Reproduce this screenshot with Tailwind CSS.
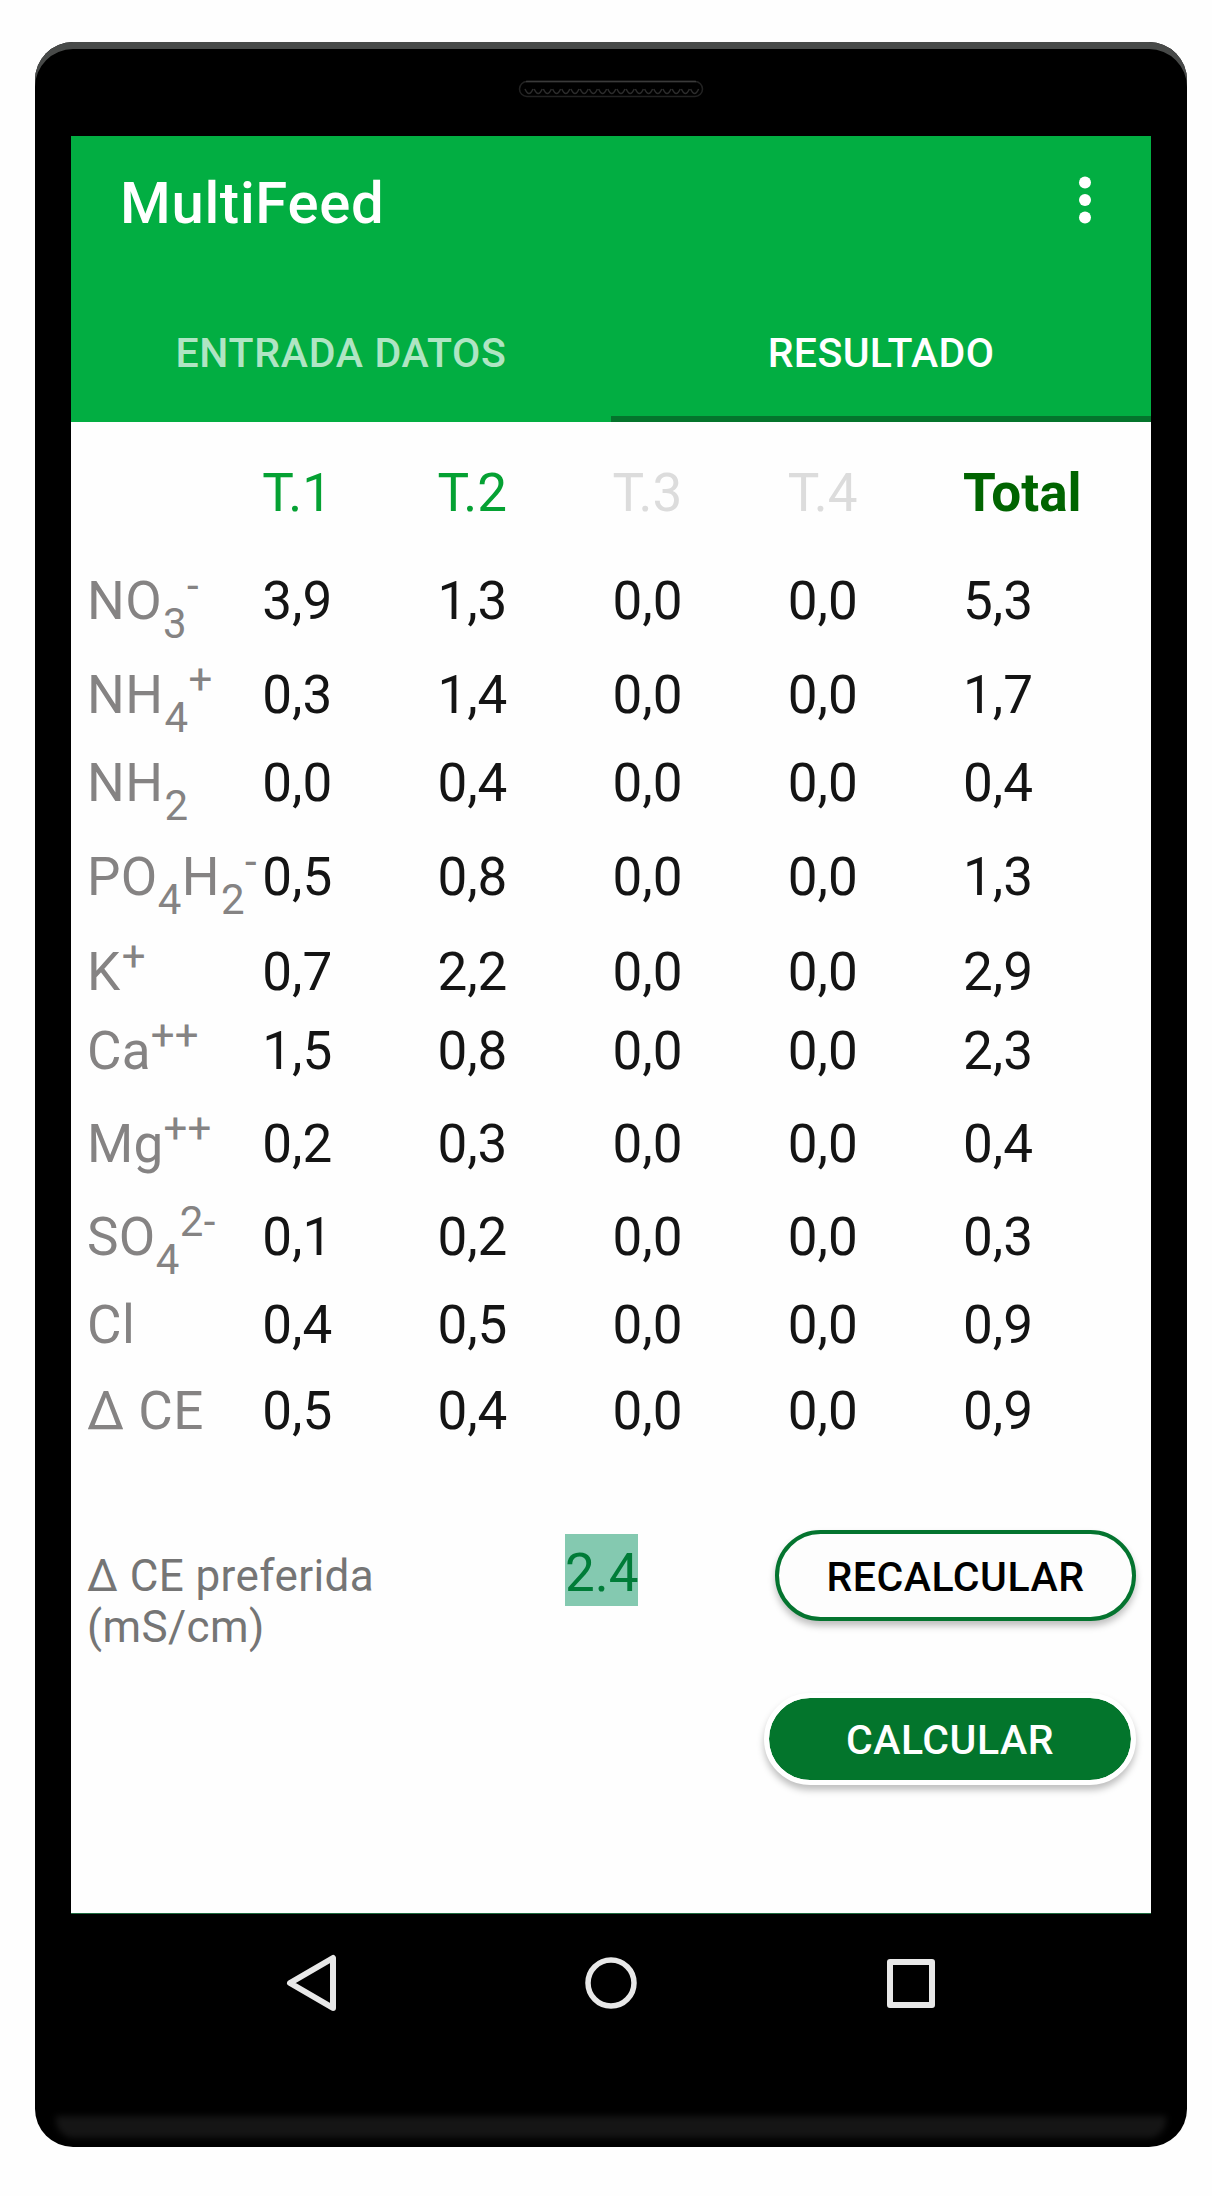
<!DOCTYPE html>
<html lang="es">
<head>
  <meta charset="UTF-8" />
  <meta name="viewport" content="width=device-width, initial-scale=1.0"/>
  <title>MultiFeed</title>
  <script src="https://cdn.jsdelivr.net/npm/@tailwindcss/browser@4"></script>
</head>
<body class="bg-[#fefefe] font-['Roboto',sans-serif]">

<!-- Phone body -->
<div class="relative mt-[42px] ml-[35px] w-[1152px] h-[2105px] rounded-[38px] bg-black overflow-hidden flex flex-col items-center shadow-[inset_0_7px_0_#484a49]">

  <!-- Speaker -->
  <div class="h-[94px] pt-[38px]">
    <svg class="block" width="186" height="18" viewBox="0 0 186 18" fill="none">
      <rect x="1.5" y="1.5" width="183" height="15" rx="7.5" stroke="#222" stroke-width="1.5"/>
      <path d="M8 1.5H178" stroke="#3a3a3a" stroke-width="1.5"/>
      <path d="M7 9q4 9 8 0m1.200 0q4 9 8 0m1.200 0q4 9 8 0m1.200 0q4 9 8 0m1.200 0q4 9 8 0m1.200 0q4 9 8 0m1.200 0q4 9 8 0m1.200 0q4 9 8 0m1.200 0q4 9 8 0m1.200 0q4 9 8 0m1.200 0q4 9 8 0m1.200 0q4 9 8 0m1.200 0q4 9 8 0m1.200 0q4 9 8 0m1.200 0q4 9 8 0m1.200 0q4 9 8 0m1.200 0q4 9 8 0m1.200 0q4 9 8 0m1.200 0q4 9 8 0" stroke="#2c2c2c" stroke-width="1.5"/>
    </svg>
  </div>

  <!-- Screen -->
  <main class="w-[1080px] h-[1778px] shrink-0 bg-[#fefefe] border-b border-[#1d6b3f] flex flex-col">
    <header class="h-[286px] bg-[#02ae42] text-white flex flex-col">
      <div class="h-[150px] pl-[49px] pr-[59px] flex items-start justify-between">
        <h1 class="pt-[33px] text-[58px] leading-[68px] font-medium tracking-[0.7px]">MultiFeed</h1>
        <svg class="mt-[38px]" width="14" height="52" viewBox="0 0 14 52" fill="#fff">
          <circle cx="7" cy="8.500" r="6"/>
          <circle cx="7" cy="26" r="6"/>
          <circle cx="7" cy="43.500" r="6"/>
        </svg>
      </div>
      <nav class="flex-1 grid grid-cols-2 text-[41px] font-medium text-center">
        <a class="pt-[43px] leading-[48px] text-white/70 tracking-[0.7px]">ENTRADA DATOS</a>
        <a class="pt-[43px] leading-[48px] border-b-6 border-[#04742c] tracking-[0.4px]">RESULTADO</a>
      </nav>
    </header>

    <!-- Results -->
    <section class="pl-[16px] pt-[40px] text-[53px] leading-[62px] text-[#141414] whitespace-nowrap">
      <div class="grid grid-cols-[repeat(5,175.2px)_1fr] h-[108px]">
        <span></span><span class="text-[#05a133]">T.1</span><span class="text-[#05a133]">T.2</span><span class="text-[#dcdcdc]">T.3</span><span class="text-[#dcdcdc]">T.4</span><span class="font-bold text-[#006400]">Total</span>
      </div>
      <div class="grid grid-cols-[repeat(5,175.2px)_1fr] h-[94px]">
        <span class="text-[#858383] tracking-[0.4px]">NO<sub class="static align-[-19px] text-[42px] ml-[1px]">3</sub><sup class="static align-[19px] text-[42px]">-</sup></span><span>3,9</span><span>1,3</span><span>0,0</span><span>0,0</span><span>5,3</span>
      </div>
      <div class="grid grid-cols-[repeat(5,175.2px)_1fr] h-[88px]">
        <span class="text-[#858383] tracking-[0.4px]">NH<sub class="static align-[-19px] text-[42px] ml-[1px]">4</sub><sup class="static align-[19px] text-[42px]">+</sup></span><span>0,3</span><span>1,4</span><span>0,0</span><span>0,0</span><span>1,7</span>
      </div>
      <div class="grid grid-cols-[repeat(5,175.2px)_1fr] h-[94px]">
        <span class="text-[#858383] tracking-[0.4px]">NH<sub class="static align-[-19px] text-[42px] ml-[1px]">2</sub></span><span>0,0</span><span>0,4</span><span>0,0</span><span>0,0</span><span>0,4</span>
      </div>
      <div class="grid grid-cols-[repeat(5,175.2px)_1fr] h-[95px]">
        <span class="text-[#858383] tracking-[0.4px]">PO<sub class="static align-[-19px] text-[42px]">4</sub>H<sub class="static align-[-19px] text-[42px] ml-[1px]">2</sub><sup class="static align-[19px] text-[42px]">-</sup></span><span>0,5</span><span>0,8</span><span>0,0</span><span>0,0</span><span>1,3</span>
      </div>
      <div class="grid grid-cols-[repeat(5,175.2px)_1fr] h-[79px]">
        <span class="text-[#858383] tracking-[0.4px]">K<sup class="static align-[19px] text-[42px] ml-[1px]">+</sup></span><span>0,7</span><span>2,2</span><span>0,0</span><span>0,0</span><span>2,9</span>
      </div>
      <div class="grid grid-cols-[repeat(5,175.2px)_1fr] h-[93px]">
        <span class="text-[#858383] tracking-[0.2px]">Ca<sup class="static align-[19px] text-[42px]">++</sup></span><span>1,5</span><span>0,8</span><span>0,0</span><span>0,0</span><span>2,3</span>
      </div>
      <div class="grid grid-cols-[repeat(5,175.2px)_1fr] h-[93px]">
        <span class="text-[#858383] tracking-[0.2px]">Mg<sup class="static align-[19px] text-[42px]">++</sup></span><span>0,2</span><span>0,3</span><span>0,0</span><span>0,0</span><span>0,4</span>
      </div>
      <div class="grid grid-cols-[repeat(5,175.2px)_1fr] h-[88px]">
        <span class="text-[#858383] tracking-[0.4px]">SO<sub class="static align-[-19px] text-[42px]">4</sub><sup class="static align-[19px] text-[42px]">2-</sup></span><span>0,1</span><span>0,2</span><span>0,0</span><span>0,0</span><span>0,3</span>
      </div>
      <div class="grid grid-cols-[repeat(5,175.2px)_1fr] h-[86px]">
        <span class="text-[#858383] tracking-[0.4px]">Cl</span><span>0,4</span><span>0,5</span><span>0,0</span><span>0,0</span><span>0,9</span>
      </div>
      <div class="grid grid-cols-[repeat(5,175.2px)_1fr] h-[62px]">
        <span class="text-[#858383] tracking-[0.4px]">Δ CE</span><span>0,5</span><span>0,4</span><span>0,0</span><span>0,0</span><span>0,9</span>
      </div>
    </section>

    <!-- Target EC and actions -->
    <section class="mt-[88px] pl-[16px] flex items-start">
      <p class="w-[478px] pt-[21px] text-[44px] leading-[51px] tracking-[0.4px] text-[#757575]">Δ CE preferida<br>(mS/cm)</p>
      <div class="mt-[4px] w-[73px] h-[72px] pt-[8px] bg-[#84c9b0] text-[#007c38] text-[53px] leading-[62px] text-center whitespace-nowrap">2.4</div>
      <button class="ml-[137px] w-[361px] h-[91px] pt-[4px] rounded-full border-[4.5px] border-[#04742f] bg-[#fdfdfd] text-black text-[41px] font-medium tracking-[0.5px] shadow-[0_5px_7px_rgba(0,0,0,0.25)]">RECALCULAR</button>
    </section>
    <div class="mt-[40px] mr-[15px] flex justify-end">
      <button class="w-[372px] h-[92px] pt-[3px] rounded-full border-[5px] border-white bg-[#03752c] bg-clip-padding text-white text-[41px] font-medium tracking-[0.5px] shadow-[0_5px_7px_rgba(0,0,0,0.25)]">CALCULAR</button>
    </div>
  </main>

  <!-- Android navigation bar -->
  <nav class="pt-[40px] pr-[1px] w-full flex justify-center gap-[249px]">
    <svg width="50" height="58" viewBox="0 0 50 58" fill="none" stroke="#e8e8e8" stroke-width="6" stroke-linejoin="round">
      <path d="M47 4V54L4 29Z"/>
    </svg>
    <svg width="52" height="58" viewBox="0 0 52 58" fill="none" stroke="#e8e8e8" stroke-width="5.500">
      <circle cx="26" cy="29" r="23"/>
    </svg>
    <svg width="50" height="58" viewBox="0 0 50 58" fill="none" stroke="#e8e8e8" stroke-width="6" stroke-linejoin="round">
      <rect x="4" y="8" width="42" height="43"/>
    </svg>
  </nav>
  <div class="mt-[104px] w-[1110px] h-[22px] shrink-0 rounded-b-[18px] bg-[#151515] blur-[3px]"></div>
</div>

</body>
</html>
